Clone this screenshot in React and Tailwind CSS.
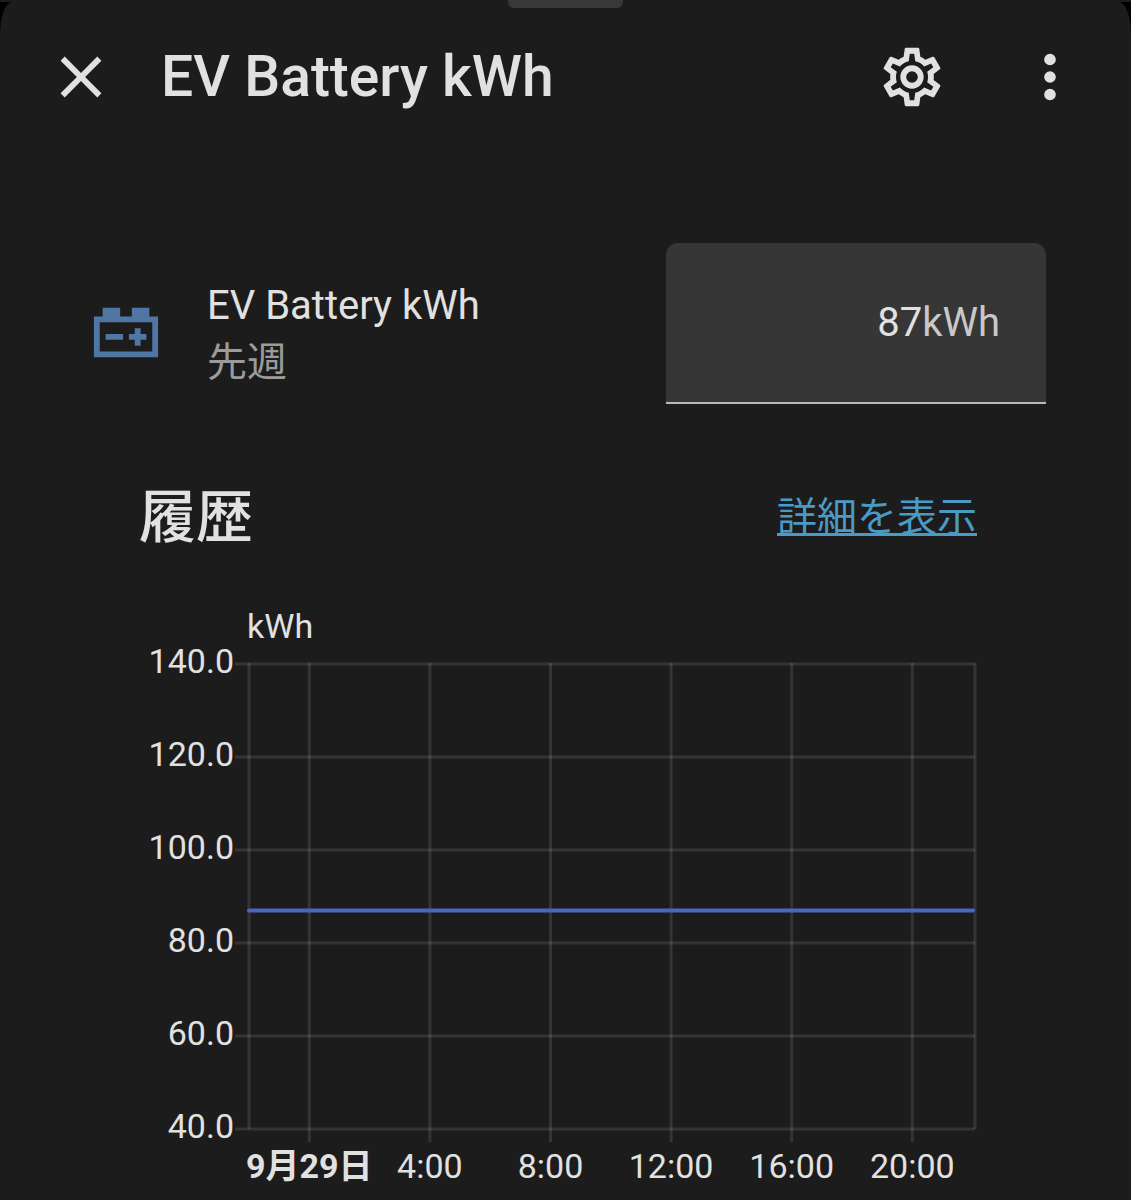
import { useState } from 'react'

// Material Design icon paths (24x24)
const ICONS = {
  close: 'M19,6.41L17.59,5L12,10.59L6.41,5L5,6.41L10.59,12L5,17.59L6.41,19L12,13.41L17.59,19L19,17.59L13.41,12L19,6.41Z',
  cog: 'M12,8A4,4 0 0,1 16,12A4,4 0 0,1 12,16A4,4 0 0,1 8,12A4,4 0 0,1 12,8M12,10A2,2 0 0,0 10,12A2,2 0 0,0 12,14A2,2 0 0,0 14,12A2,2 0 0,0 12,10M10,22C9.75,22 9.54,21.82 9.5,21.58L9.13,18.93C8.5,18.68 7.96,18.34 7.44,17.94L4.95,18.95C4.73,19.03 4.46,18.95 4.34,18.73L2.34,15.27C2.21,15.05 2.27,14.78 2.46,14.63L4.57,12.97L4.5,12L4.57,11L2.46,9.37C2.27,9.22 2.21,8.95 2.34,8.73L4.34,5.27C4.46,5.05 4.73,4.96 4.95,5.05L7.44,6.05C7.96,5.66 8.5,5.32 9.13,5.07L9.5,2.42C9.54,2.18 9.75,2 10,2H14C14.25,2 14.46,2.18 14.5,2.42L14.87,5.07C15.5,5.32 16.04,5.66 16.56,6.05L19.05,5.05C19.27,4.96 19.54,5.05 19.66,5.27L21.66,8.73C21.79,8.95 21.73,9.22 21.54,9.37L19.43,11L19.5,12L19.43,13L21.54,14.63C21.73,14.78 21.79,15.05 21.66,15.27L19.66,18.73C19.54,18.95 19.27,19.04 19.05,18.95L16.56,17.95C16.04,18.34 15.5,18.68 14.87,18.93L14.5,21.58C14.46,21.82 14.25,22 14,22H10M11.25,4L10.88,6.61C9.68,6.86 8.62,7.5 7.85,8.39L5.44,7.35L4.69,8.65L6.8,10.2C6.4,11.37 6.4,12.64 6.8,13.8L4.68,15.36L5.43,16.66L7.86,15.62C8.63,16.5 9.68,17.14 10.87,17.38L11.24,20H12.76L13.13,17.39C14.32,17.14 15.37,16.5 16.14,15.62L18.57,16.66L19.32,15.36L17.2,13.81C17.6,12.64 17.6,11.37 17.2,10.2L19.31,8.65L18.56,7.35L16.15,8.39C15.38,7.5 14.32,6.86 13.12,6.62L12.75,4H11.25Z',
  dots: 'M12,16A2,2 0 0,1 14,18A2,2 0 0,1 12,20A2,2 0 0,1 10,18A2,2 0 0,1 12,16M12,10A2,2 0 0,1 14,12A2,2 0 0,1 12,14A2,2 0 0,1 10,12A2,2 0 0,1 12,10M12,4A2,2 0 0,1 14,6A2,2 0 0,1 12,8A2,2 0 0,1 10,6A2,2 0 0,1 12,4Z',
  battery: 'M4,3V6H1V20H23V6H20V3H14V6H10V3H4M3,8H21V18H3V8M15,10V12H13V14H15V16H17V14H19V12H17V10H15M5,12V14H11V12H5Z'
}

// Plot area of the history chart, in viewBox units
const PLOT = { left: 110, right: 836, top: 64, bottom: 529 }
const Y_MIN = 40
const Y_MAX = 140
const Y_TICKS = [140, 120, 100, 80, 60, 40]
const X_TICKS = [
  { hour: 0, label: '9月29日', bold: true },
  { hour: 4, label: '4:00' },
  { hour: 8, label: '8:00' },
  { hour: 12, label: '12:00' },
  { hour: 16, label: '16:00' },
  { hour: 20, label: '20:00' }
]

function getY(value) {
  return PLOT.bottom - ((value - Y_MIN) / (Y_MAX - Y_MIN)) * (PLOT.bottom - PLOT.top)
}

// The plot starts two hours before midnight
function getX(hour) {
  return PLOT.left + (hour + 2) * 30.15
}

function Icon({ name, className }) {
  return (
    <svg className={className} viewBox="0 0 24 24" fill="currentColor" aria-hidden="true">
      <path d={ICONS[name]} />
    </svg>
  )
}

function IconButton({ icon, label }) {
  return (
    <button type="button" aria-label={label} className="flex h-[138px] w-[138px] shrink-0 items-center justify-center">
      <Icon name={icon} className="h-[70px] w-[70px]" />
    </button>
  )
}

function HistoryChart({ value }) {
  return (
    <svg viewBox="0 0 838 598" className="block w-full" role="img" aria-label="EV Battery kWh">
      <g stroke="#ffffff" strokeOpacity="0.11" strokeWidth="3">
        {Y_TICKS.map((tick) => (
          <line key={tick} x1={PLOT.left - 14} x2={PLOT.right} y1={getY(tick)} y2={getY(tick)} />
        ))}
        {X_TICKS.map(({ hour }) => (
          <line key={hour} x1={getX(hour)} x2={getX(hour)} y1={PLOT.top - 1} y2={PLOT.bottom + 13} />
        ))}
        <line x1={PLOT.left} x2={PLOT.left} y1={PLOT.top - 1} y2={PLOT.bottom} />
        <line x1={PLOT.right} x2={PLOT.right} y1={PLOT.top - 1} y2={PLOT.bottom} />
      </g>
      <line
        x1={PLOT.left}
        x2={PLOT.right - 2}
        y1={getY(value)}
        y2={getY(value)}
        stroke="#4d65bd"
        strokeWidth="4"
        strokeLinecap="round"
      />
      <g fill="#e1e1e1" className="text-[34px]">
        <text x={PLOT.left - 2} y="38">kWh</text>
        {Y_TICKS.map((tick) => (
          <text key={tick} x={PLOT.left - 15} y={getY(tick) + 9} textAnchor="end">
            {tick.toFixed(1)}
          </text>
        ))}
        {X_TICKS.map(({ hour, label, bold }) => (
          <text key={hour} x={getX(hour)} y="578" textAnchor="middle" className={bold ? 'font-bold' : ''}>
            {label}
          </text>
        ))}
      </g>
    </svg>
  )
}

export default function App() {
  const [value, setValue] = useState('87')

  return (
    <div
      lang="ja"
      className="flex min-h-screen flex-col border-t-2 border-[#1c1c1c] bg-black font-['Roboto','Noto_Sans_CJK_JP',sans-serif] text-[#e1e1e1]"
    >
      <div className="flex-1 rounded-t-[12px_33px] bg-[#1c1c1c]">
        {/* Drag handle */}
        <div className="mx-auto -mt-[2px] h-2 w-[115px] rounded-b-md bg-[#383838]" />

        <header className="flex items-center px-3">
          <IconButton icon="close" label="閉じる" />
          <h1 className="ml-[11px] min-w-0 flex-1 truncate text-[57px] leading-[72px] font-medium">EV Battery kWh</h1>
          <IconButton icon="cog" label="設定" />
          <IconButton icon="dots" label="メニュー" />
        </header>

        <main className="px-[85px] pt-[97px]">
          {/* Entity row */}
          <div className="flex items-start">
            <div className="flex min-w-0 flex-1 items-center pt-[34px] pl-[6px]">
              <Icon name="battery" className="h-[70px] w-[70px] shrink-0 text-[#4f76a5]" />
              <div className="ml-[46px] min-w-0 text-[40px] leading-[57px]">
                <label htmlFor="battery-value" className="block truncate">EV Battery kWh</label>
                <div className="text-[#9b9b9b]">先週</div>
              </div>
            </div>
            <div className="flex h-[161px] w-[380px] items-center rounded-t-xl border-b-2 border-[#b8b9b8] bg-[#363636] px-[46px] text-[40px]">
              <input
                id="battery-value"
                type="text"
                inputMode="decimal"
                value={value}
                onChange={(e) => setValue(e.target.value)}
                className="min-w-0 flex-1 bg-transparent text-right outline-none"
              />
              <span className="text-[#c8c8c8]">kWh</span>
            </div>
          </div>

          {/* History */}
          <section className="pt-[72px] pr-[69px] pl-[54px]">
            <div className="flex items-center justify-between">
              <h2 className="text-[57px] leading-[84px] font-medium">履歴</h2>
              <a href="#history" className="text-[40px] text-[#4a9ac6] underline decoration-[3px]">詳細を表示</a>
            </div>
            <div className="mt-10">
              <HistoryChart value={Number(value) || Y_MIN} />
            </div>
          </section>
        </main>
      </div>
    </div>
  )
}
